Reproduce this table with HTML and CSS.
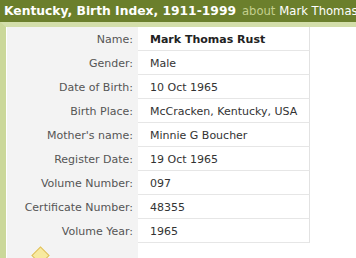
FILE: index.html
```html
<!DOCTYPE html>
<html>
<head>
<meta charset="utf-8">
<link rel="stylesheet" href="styles.css">
</head>
<body>
<div class="header"><span class="title">Kentucky, Birth Index, 1911-1999</span> <span class="about">about</span> <span class="who">Mark Thomas Rust</span></div>
<div class="panel">
  <div class="record">
    <div class="label">Name:</div><div class="value name">Mark Thomas Rust</div>
    <div class="label">Gender:</div><div class="value">Male</div>
    <div class="label">Date of Birth:</div><div class="value">10 Oct 1965</div>
    <div class="label">Birth Place:</div><div class="value">McCracken, Kentucky, USA</div>
    <div class="label">Mother's name:</div><div class="value">Minnie G Boucher</div>
    <div class="label">Register Date:</div><div class="value">19 Oct 1965</div>
    <div class="label">Volume Number:</div><div class="value">097</div>
    <div class="label">Certificate Number:</div><div class="value">48355</div>
    <div class="label">Volume Year:</div><div class="value">1965</div>
  </div>
  <div class="foot"><span class="diamond"></span></div>
</div>
</body>
</html>
```
FILE: styles.css
```css
html, body {
  margin: 0;
  padding: 0;
  background: #fff;
  overflow: hidden;
}
body {
  font-family: "DejaVu Sans", Verdana, sans-serif;
}
.header {
  height: 22px;
  line-height: 22px;
  background: #6b7f2c;
  color: #fff;
  font-size: 12.3px;
  padding-left: 4px;
  white-space: nowrap;
  overflow: hidden;
}
.title { font-weight: bold; }
.about { color: #c4cf8e; font-size: 11.6px; margin-left: 2px; }
.who { font-size: 11.6px; }
.panel {
  border-top: 5px solid #d3deaa;
  border-left: 6px solid #cbd89a;
  padding-left: 1px;
}
.record {
  display: grid;
  grid-template-columns: 131px 172px;
  font-size: 11px;
}
.label, .value {
  height: 24px;
  padding-top: 2px;
  line-height: 21px;
  box-sizing: border-box;
}
.label {
  background: #f3f3f3;
  color: #555;
  text-align: right;
  padding-right: 5px;
  border-bottom: 1px solid #f3f3f3;
}
.value {
  color: #333;
  padding-left: 12px;
  border-bottom: 1px solid #e6e6e6;
  border-right: 1px solid #e2e2e2;
}
.name { font-weight: bold; color: #222; }
.foot {
  width: 131px;
  height: 20px;
  background: #f3f3f3;
  position: relative;
}
.diamond {
  position: absolute;
  left: 27px;
  top: 6px;
  width: 11px;
  height: 11px;
  background: #f7eaa0;
  border: 1px solid #e0c060;
  transform: rotate(45deg);
}
```
